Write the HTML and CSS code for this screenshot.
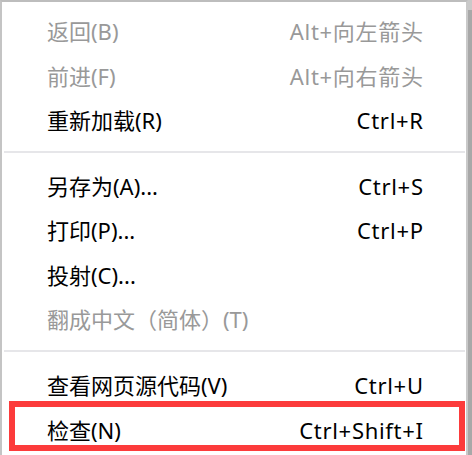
FILE: index.html
```html
<!DOCTYPE html>
<html lang="zh-CN">
<head>
<meta charset="utf-8">
<title>Context menu</title>
<link rel="stylesheet" href="styles.css">
</head>
<body>
<div class="menu">
  <div class="item disabled"><span class="label">返回(B)</span><span class="key">Alt+向左箭头</span></div>
  <div class="item disabled"><span class="label">前进(F)</span><span class="key">Alt+向右箭头</span></div>
  <div class="item"><span class="label">重新加载(R)</span><span class="key">Ctrl+R</span></div>
  <div class="sep"></div>
  <div class="item"><span class="label">另存为(A)...</span><span class="key">Ctrl+S</span></div>
  <div class="item"><span class="label">打印(P)...</span><span class="key">Ctrl+P</span></div>
  <div class="item"><span class="label">投射(C)...</span></div>
  <div class="item disabled"><span class="label">翻成中文（简体）(T)</span></div>
  <div class="sep"></div>
  <div class="item"><span class="label">查看网页源代码(V)</span><span class="key">Ctrl+U</span></div>
  <div class="item marked"><span class="label">检查(N)</span><span class="key">Ctrl+Shift+I</span></div>
</div>
</body>
</html>
```
FILE: styles.css
```css
html, body {
  margin: 0;
  padding: 0;
}
body {
  background: #c9c9c9;
  width: 472px;
  height: 455px;
  overflow: hidden;
  font-family: "Noto Sans", "Noto Sans CJK SC", sans-serif;
  font-size: 22px;
}
.menu {
  box-sizing: border-box;
  width: 468px;
  height: 455px;
  background: #ffffff;
  border-top: 2px solid #bdbdbd;
  border-left: 2px solid #c4c4c4;
  border-right: 2px solid #c9c9c9;
  box-shadow: 4px 10px 0 #a8a8a8;
  padding-top: 6.7px;
}
.item {
  position: relative;
  display: flex;
  justify-content: space-between;
  align-items: center;
  height: 44.6px;
  padding: 0 43px 0 45px;
  color: #000000;
  line-height: 1;
  white-space: nowrap;
}
.item.disabled {
  color: #999999;
}
.key {
  letter-spacing: 0.7px;
  margin-right: -0.7px;
}
.sep {
  height: 2px;
  background: #e6e6e9;
  margin: 8.5px 1px 10.4px 2px;
}
.marked::after {
  content: "";
  position: absolute;
  top: -6px;
  left: 7px;
  right: 1px;
  height: 50px;
  box-sizing: border-box;
  border: 6px solid #fc3b3b;
}
```
